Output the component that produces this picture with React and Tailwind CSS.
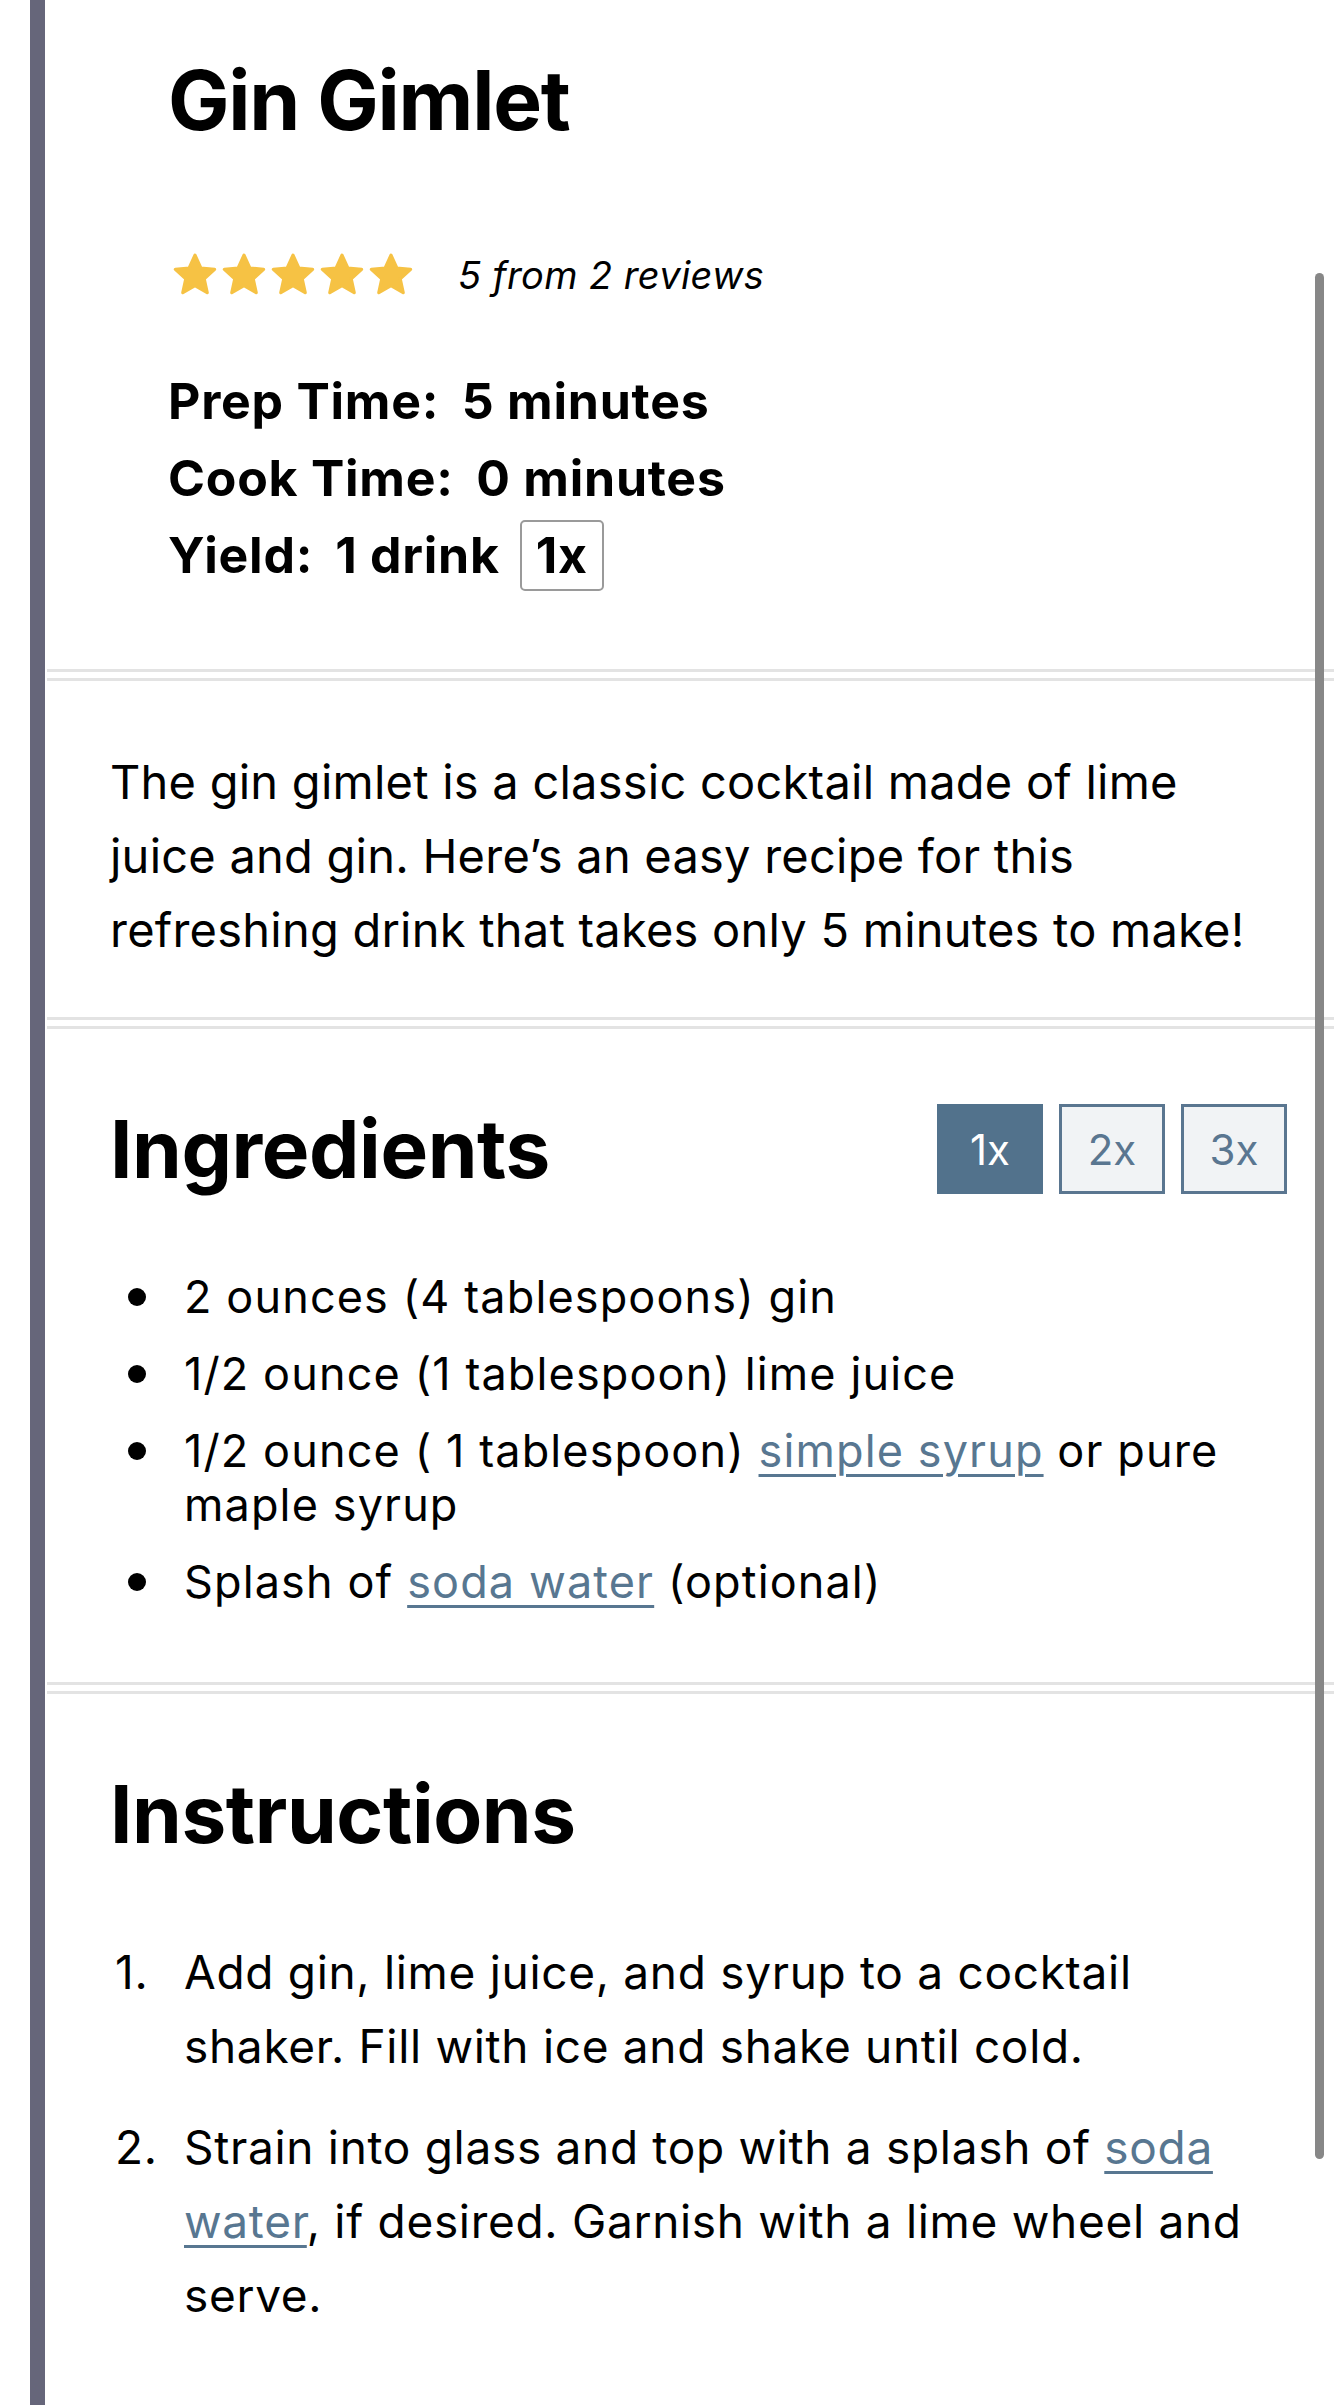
import React from 'react';

const linkCls = 'text-[#587791] underline decoration-[3px] underline-offset-[7px] decoration-[#587791]';

const Star = () => (
  <svg width="48" height="46" viewBox="0 0 24 23" className="shrink-0">
    <path
      d="M12 1.6l2.9 6.4 6.9.7-5.2 4.7 1.5 6.9L12 16.8l-6.1 3.5 1.5-6.9-5.2-4.7 6.9-.7z"
      fill="#f6c244"
      stroke="#f6c244"
      strokeWidth="1.6"
      strokeLinejoin="round"
    />
  </svg>
);

const Divider = () => (
  <div className="ml-[2px] h-[12px] border-y-[3px] border-[#e3e3e3]" />
);

const ingredients = [
  { id: 1, body: <>2 ounces (4 tablespoons) gin</> },
  { id: 2, body: <>1/2 ounce (1 tablespoon) lime juice</> },
  {
    id: 3,
    body: (
      <>
        1/2 ounce ( 1 tablespoon) <a className={linkCls}>simple syrup</a> or pure maple syrup
      </>
    )
  },
  {
    id: 4,
    body: (
      <>
        Splash of <a className={linkCls}>soda water</a> (optional)
      </>
    )
  }
];

const steps = [
  { id: 1, body: <>Add gin, lime juice, and syrup to a cocktail shaker. Fill with ice and shake until cold.</> },
  {
    id: 2,
    body: (
      <>
        Strain into glass and top with a splash of <a className={linkCls}>soda water</a>, if desired. Garnish with a lime wheel and serve.
      </>
    )
  }
];

export default function App() {
  return (
    <div className="flex min-h-[2405px] bg-white text-black font-['Inter',sans-serif]">
      {/* left rule */}
      <div className="ml-[30px] w-[15px] shrink-0 bg-[#66667a]" />

      <div className="relative flex-1">
        {/* scroll indicator */}
        <div className="absolute right-[10px] top-[273px] h-[1886px] w-[9px] rounded-full bg-[#878787]" />

        {/* Header */}
        <div className="pl-[123px] pt-[60px] pb-[75px]">
          <h1 className="text-[82px] font-bold leading-none tracking-[-0.015em]">Gin Gimlet</h1>
          <div className="mt-[111px] flex h-[44px] items-center">
            <div className="ml-[3px] flex gap-[1px]">
              <Star />
              <Star />
              <Star />
              <Star />
              <Star />
            </div>
            <span className="ml-[43px] text-[38px] italic leading-none tracking-[0.01em]">5 from 2 reviews</span>
          </div>
          <div className="mt-[66px] text-[50px] font-bold leading-[77px] tracking-[0.015em]">
            <div>
              <span className="mr-[10px]">Prep Time:</span> 5 minutes
            </div>
            <div>
              <span className="mr-[10px]">Cook Time:</span> 0 minutes
            </div>
            <div className="flex items-center">
              <span>Yield:</span>
              <span className="ml-[22px]">1 drink</span>
              <span className="ml-[20px] inline-flex h-[71px] w-[84px] items-center justify-center rounded-[5px] border-[2px] border-[#9a9a9a]">
                1x
              </span>
            </div>
          </div>
        </div>

        <Divider />

        {/* Summary */}
        <div className="pl-[65px] pr-[65px] pt-[64px] pb-[50px]">
          <p className="text-[47px] leading-[74px] tracking-[0.005em]">
            The gin gimlet is a classic cocktail made of lime juice and gin. Here’s an easy recipe for this refreshing drink that takes only 5 minutes to make!
          </p>
        </div>

        <Divider />

        {/* Ingredients */}
        <div className="pl-[65px] pr-[47px] pt-[75px] pb-[73px]">
          <div className="flex h-[90px] items-center justify-between">
            <h2 className="text-[80px] font-bold leading-none tracking-[-0.005em]">Ingredients</h2>
            <div className="flex gap-[16px]">
              <button className="flex h-[90px] w-[106px] items-center justify-center border-[3px] border-[#52728c] bg-[#52728c] text-[42px] font-normal text-white">
                1x
              </button>
              <button className="flex h-[90px] w-[106px] items-center justify-center border-[3px] border-[#5a7690] bg-[#f1f3f5] text-[42px] font-normal text-[#5a7690]">
                2x
              </button>
              <button className="flex h-[90px] w-[106px] items-center justify-center border-[3px] border-[#5a7690] bg-[#f1f3f5] text-[42px] font-normal text-[#5a7690]">
                3x
              </button>
            </div>
          </div>
          <ul className="mt-[76px] flex flex-col gap-[23px] text-[45px] leading-[54px] tracking-[0.025em]">
            {ingredients.map((item) => (
              <li key={item.id} className="flex">
                <span className="w-[74px] shrink-0 pl-[18px] pt-[18px]">
                  <span className="block h-[18px] w-[18px] rounded-full bg-black" />
                </span>
                <span>{item.body}</span>
              </li>
            ))}
          </ul>
        </div>

        <Divider />

        {/* Instructions */}
        <div className="pl-[65px] pr-[47px] pt-[80px] pb-[70px]">
          <h2 className="text-[80px] font-bold leading-none tracking-[-0.005em]">Instructions</h2>
          <ol className="mt-[81px] flex flex-col gap-[27px] text-[46px] leading-[74px] tracking-[0.015em]">
            {steps.map((step) => (
              <li key={step.id} className="flex">
                <span className="w-[74px] shrink-0 pl-[5px]">{step.id}.</span>
                <span>{step.body}</span>
              </li>
            ))}
          </ol>
        </div>
      </div>
    </div>
  );
}
